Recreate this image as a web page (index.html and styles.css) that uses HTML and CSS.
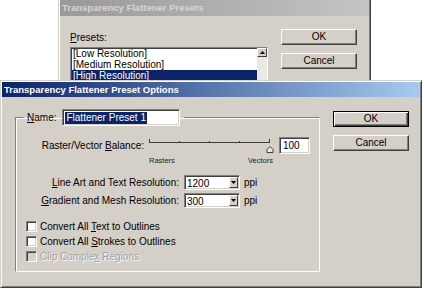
FILE: index.html
```html
<!DOCTYPE html>
<html>
<head>
<meta charset="utf-8">
<link rel="stylesheet" href="styles.css">
</head>
<body>
<div class="desk">
  <div class="win back">
    <div class="title inactive">Transparency Flattener Presets</div>
    <div class="back-body">
      <div class="presets-col">
        <div class="lbl"><u>P</u>resets:</div>
        <div class="listbox">
          <div class="items">
            <div class="item">[Low Resolution]</div>
            <div class="item">[Medium Resolution]</div>
            <div class="item sel">[High Resolution]</div>
          </div>
          <div class="vscroll">
            <div class="sbtn"><svg width="5" height="3" viewBox="0 0 5 3"><path d="M2.5 0L5 3H0Z" fill="#000"/></svg></div>
            <div class="track"></div>
          </div>
        </div>
      </div>
      <div class="btncol back-btns">
        <div class="btn">OK</div>
        <div class="btn">Cancel</div>
      </div>
    </div>
  </div>

  <div class="win front">
    <div class="title active">Transparency Flattener Preset Options</div>
    <div class="front-body">
      <fieldset class="group">
        <legend class="legend">
          <span class="lbl"><u>N</u>ame:</span>
          <span class="field name-field"><span class="seltext">Flattener Preset 1</span></span>
        </legend>
        <div class="row raster-row">
          <span class="rlabel raster-label">Raster/Vector <u>B</u>alance:</span>
          <svg class="slider" width="126" height="17" viewBox="0 0 126 17">
            <line x1="0" y1="5.5" x2="121" y2="5.5" stroke="#3c3c3c" stroke-width="1"/>
            <line x1="0.5" y1="2" x2="0.5" y2="6" stroke="#3c3c3c"/>
            <line x1="30.5" y1="4" x2="30.5" y2="6" stroke="#3c3c3c"/>
            <line x1="60.5" y1="4" x2="60.5" y2="6" stroke="#3c3c3c"/>
            <line x1="90.5" y1="4" x2="90.5" y2="6" stroke="#3c3c3c"/>
            <line x1="120.5" y1="2" x2="120.5" y2="6" stroke="#3c3c3c"/>
            <path d="M121 9.5L124 12.5V15.5H118V12.5Z" fill="#e8e6e2" stroke="#404040" stroke-width="1"/>
          </svg>
          <span class="field num-field">100</span>
        </div>
        <div class="row scale-row">
          <span class="scale-l">Rasters</span>
          <span class="scale-r">Vectors</span>
        </div>
        <div class="row res-row first">
          <span class="rlabel res-label"><u>L</u>ine Art and Text Resolution:</span>
          <span class="field combo"><span class="ctext">1200</span><span class="cbtn"><svg width="5" height="3" viewBox="0 0 5 3"><path d="M0 0H5L2.5 3Z" fill="#000"/></svg></span></span>
          <span class="unit">ppi</span>
        </div>
        <div class="row res-row">
          <span class="rlabel res-label"><u>G</u>radient and Mesh Resolution:</span>
          <span class="field combo"><span class="ctext">300</span><span class="cbtn"><svg width="5" height="3" viewBox="0 0 5 3"><path d="M0 0H5L2.5 3Z" fill="#000"/></svg></span></span>
          <span class="unit">ppi</span>
        </div>
        <div class="checks">
          <div class="check"><span class="box"></span><span>Convert All <u>T</u>ext to Outlines</span></div>
          <div class="check"><span class="box"></span><span>Convert All <u>S</u>trokes to Outlines</span></div>
          <div class="check disabled"><span class="box"></span><span>Clip Comple<u>x</u> Regions</span></div>
        </div>
      </fieldset>
      <div class="btncol front-btns">
        <div class="btn default">OK</div>
        <div class="btn">Cancel</div>
      </div>
    </div>
  </div>
</div>
</body>
</html>
```

FILE: styles.css
```css
* { box-sizing: border-box; }
html, body { margin: 0; padding: 0; background: #fff; }
body {
  font-family: "Liberation Sans", Arial, sans-serif;
  font-size: 10px;
  color: #000;
}
.desk {
  position: relative;
  width: 424px;
  height: 289px;
  overflow: hidden;
  background: #fff;
}
u { text-decoration: underline; text-underline-offset: 1px; }

.win {
  position: absolute;
  background: #d4d0c8;
  border: 1px solid;
  border-color: #d4d0c8 #404040 #404040 #d4d0c8;
  box-shadow: inset 1px 1px #fff, inset -1px -1px #808080;
  padding: 1px;
  display: flex;
  flex-direction: column;
}
.back { left: 58px; top: -2px; width: 313px; height: 110px; z-index: 1; }
.front { left: 0; top: 80px; width: 422px; height: 208px; z-index: 2; }

.title {
  height: 16px;
  font-weight: bold;
  font-size: 9.5px;
  line-height: 16px;
  padding-left: 2px;
  white-space: nowrap;
  flex: none;
}
.title.inactive {
  background: linear-gradient(to right, #999 0%, #c4c4c4 100%);
  color: #d8d6d0;
}
.title.active {
  height: 15px;
  line-height: 15px;
  background: linear-gradient(to right, #0a246a 0%, #a6caf0 100%);
  color: #fff;
}

/* back dialog */
.back-body {
  display: flex;
  padding: 13px 0 0 10px;
}
.presets-col { display: flex; flex-direction: column; width: 198px; }
.presets-col .lbl { margin-top: 2px; height: 13px; line-height: 13px; }
.listbox {
  margin-top: 3px;
  display: flex;
  background: #fff;
  border: 1px solid;
  border-color: #808080 #fff #fff #808080;
  box-shadow: inset 1px 1px #404040;
  height: 60px;
}
.items { flex: 1; padding: 0 0 0 1px; }
.item { height: 11px; line-height: 11px; padding-left: 1px; white-space: nowrap; }
.item.sel { background: #0a246a; color: #fff; }
.vscroll { width: 10px; display: flex; flex-direction: column; }
.sbtn {
  height: 9px;
  background: #d4d0c8;
  border: 1px solid;
  border-color: #fff #404040 #404040 #fff;
  display: flex; align-items: center; justify-content: center;
}
.track { flex: 1; background: #ebe9e5; }

.btncol { display: flex; flex-direction: column; }
.back-btns { margin-left: 13px; gap: 8px; }
.btn {
  width: 76px;
  height: 16px;
  line-height: 14px;
  text-align: center;
  background: #d4d0c8;
  border: 1px solid;
  border-color: #fff #404040 #404040 #fff;
  box-shadow: inset -1px -1px #808080;
}
.btn.default {
  border: 1px solid #000;
  box-shadow: inset 1px 1px #fff, inset -1px -1px #404040, inset -2px -2px #808080;
}

/* front dialog */
.front-body {
  display: flex;
  padding: 12px 0 0 13px;
}
.group {
  margin: 0;
  width: 305px;
  height: 163px;
  padding: 0;
  border: 2px groove #d4d0c8;
  border-color: #808080 #fff #fff #808080;
  border-style: solid;
  border-width: 1px;
  box-shadow: 1px 1px 0 #fff inset;
  outline: none;
}
.legend {
  margin-left: 8px;
  padding: 0 4px 0 3px;
  display: flex;
  align-items: center;
  height: 17px;
}
.legend .lbl { margin-right: 6px; }
.field {
  background: #fff;
  border: 1px solid;
  border-color: #808080 #fff #fff #808080;
  box-shadow: inset 1px 1px #404040, inset -1px -1px #d4d0c8;
}
.name-field {
  width: 118px;
  height: 17px;
  display: flex;
  align-items: center;
  padding-left: 2px;
}
.seltext { background: #0a246a; color: #fff; line-height: 12px; padding: 0 1px; }

.row { display: flex; align-items: center; }
.rlabel { text-align: right; white-space: nowrap; margin-right: 5px; }
.raster-row { margin-top: 11px; height: 17px; }
.raster-label { width: 128px; }
.slider { display: block; }
.num-field {
  margin-left: 4px;
  width: 31px;
  height: 17px;
  line-height: 15px;
  padding-left: 3px;
}
.scale-row { height: 9px; margin-top: 2px; font-size: 7.5px; line-height: 9px; color: #222; }
.scale-l { margin-left: 133px; width: 99px; }
.res-row { height: 15px; margin-top: 3px; }
.res-row.first { margin-top: 10px; }
.res-label { width: 163px; }
.combo {
  width: 56px;
  height: 15px;
  display: flex;
  align-items: stretch;
  padding: 1px 1px 1px 2px;
}
.ctext { flex: 1; line-height: 13px; }
.cbtn {
  width: 9px;
  background: #d4d0c8;
  border: 1px solid;
  border-color: #fff #404040 #404040 #fff;
  display: flex; align-items: center; justify-content: center;
}
.unit { margin-left: 4px; }

.checks { margin-top: 13px; padding-left: 10px; display: flex; flex-direction: column; gap: 4px; }
.check { display: flex; align-items: center; height: 11px; white-space: nowrap; }
.box {
  width: 11px; height: 11px;
  margin-right: 3px;
  background: #fff;
  border: 1px solid;
  border-color: #808080 #fff #fff #808080;
  box-shadow: inset 1px 1px #404040, inset -1px -1px #d4d0c8;
  flex: none;
}
.check.disabled { color: #a0a0a0; text-shadow: 1px 1px 0 #fff; }
.check.disabled .box { background: #d4d0c8; }

.front-btns { margin-left: 13px; margin-top: 2px; gap: 8px; }
```
